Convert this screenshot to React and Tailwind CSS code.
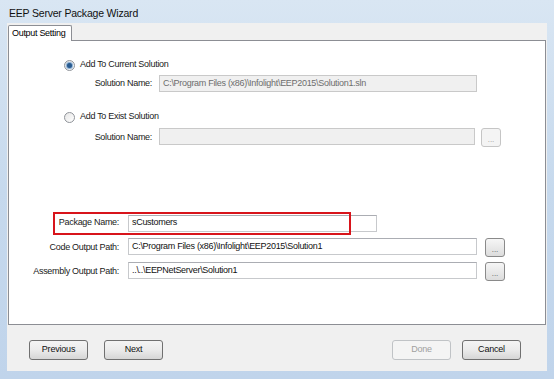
import React from "react";

const font = { fontFamily: '"Liberation Sans", Arial, sans-serif' };

const Radio = ({ checked }) => (
  <span className="w-[11px] h-[11px] rounded-full border border-[#8f9399] bg-gradient-to-br from-[#e6e6e6] to-[#ffffff] flex items-center justify-center">
    {checked && (
      <span className="w-[5px] h-[5px] rounded-full bg-[#2a5b8f] shadow-[0_0_1px_1px_#7fa7cf]" />
    )}
  </span>
);

const TextBox = ({ value, disabled, className }) => (
  <div
    className={`h-[17px] border flex items-center pl-[3px] text-[9px] tracking-[-0.3px] overflow-hidden whitespace-nowrap ${
      disabled
        ? "bg-[#f0f0f0] border-[#c9c9c9] text-[#6d6d6d]"
        : "bg-white border-[#c7c9cc] border-t-[#abadb3] text-[#111]"
    } ${className}`}
  >
    {value}
  </div>
);

const DotsButton = ({ disabled }) => (
  <button
    className={`w-[20px] h-[19px] rounded-[3px] border text-[8px] leading-none pb-[2px] flex items-end justify-center ${
      disabled
        ? "border-[#c5c5c5] bg-[#f4f4f4] text-[#9a9a9a]"
        : "border-[#8a8a8a] bg-gradient-to-b from-[#f6f6f6] to-[#dcdcdc] text-[#555]"
    }`}
  >
    ...
  </button>
);

const WinButton = ({ children, disabled, className }) => (
  <button
    className={`w-[59px] h-[20px] rounded-[3px] border text-[9px] tracking-[-0.2px] ${
      disabled
        ? "border-[#c0c3c6] bg-[#f4f4f4] text-[#a0a0a0]"
        : "border-[#707070] bg-gradient-to-b from-[#f4f4f4] via-[#ebebeb] to-[#d6d6d6] text-[#111]"
    } ${className}`}
  >
    {children}
  </button>
);

const Label = ({ children, width }) => (
  <div
    className="text-[9px] tracking-[-0.3px] text-[#1a1a1a] text-right pr-[1px] whitespace-nowrap"
    style={{ width }}
  >
    {children}
  </div>
);

export default function App() {
  return (
    <div
      className="w-[554px] h-[379px] flex flex-col bg-gradient-to-b from-[#d9e6f3] via-[#c6d9ed] to-[#c0d4eb]"
      style={font}
    >
      {/* title bar */}
      <div className="h-[23px] pl-[9px] pt-[6px] text-[10.5px] tracking-[-0.2px] text-[#111]">
        EEP Server Package Wizard
      </div>

      <div className="ml-[7px] mr-[7px] mb-[8px] flex-1 bg-[#f0f0f0] flex flex-col">
        {/* tab strip */}
        <div className="h-[17px] flex items-end pl-[1px]">
          <div className="w-[64px] h-[16px] bg-white border border-b-0 border-[#8c8e94] rounded-t-[2px] text-[9px] tracking-[-0.3px] pl-[3px] pt-[1px] relative top-[1px]">
            Output Setting
          </div>
        </div>

        {/* panel */}
        <div className="ml-[1px] mr-[1px] h-[285px] bg-white border border-[#8c8e94] flex flex-col">
          <div className="mt-[18px] h-[12px] flex items-center pl-[55px] gap-[5px]">
            <Radio checked />
            <span className="text-[9px] tracking-[-0.3px] text-[#1a1a1a]">Add To Current Solution</span>
          </div>
          <div className="mt-[4px] flex items-center gap-[6px]">
            <Label width="144px">Solution Name:</Label>
            <TextBox
              disabled
              className="w-[318px]"
              value="C:\Program Files (x86)\Infolight\EEP2015\Solution1.sln"
            />
          </div>

          <div className="mt-[19px] h-[12px] flex items-center pl-[55px] gap-[5px]">
            <Radio />
            <span className="text-[9px] tracking-[-0.3px] text-[#1a1a1a]">Add To Exist Solution</span>
          </div>
          <div className="mt-[5px] h-[19px] flex items-start gap-[6px]">
            <Label width="144px">
              <div className="pt-[3px]">Solution Name:</div>
            </Label>
            <TextBox disabled className="w-[316px]" value="" />
            <DotsButton disabled />
          </div>

          <div className="mt-[68px] h-[16px] flex items-center gap-[8px] relative">
            <Label width="111px">Package Name:</Label>
            <TextBox className="w-[249px] h-[16px]" value="sCustomers" />
            <div className="absolute left-[44px] top-[-3px] w-[298px] h-[23px] border-2 border-[#d8141b]" />
          </div>

          <div className="mt-[7px] h-[19px] flex items-start gap-[8px]">
            <Label width="111px">
              <div className="pt-[3px]">Code Output Path:</div>
            </Label>
            <TextBox
              className="w-[349px]"
              value="C:\Program Files (x86)\Infolight\EEP2015\Solution1"
            />
            <DotsButton />
          </div>

          <div className="mt-[5px] h-[19px] flex items-start gap-[8px]">
            <Label width="111px">
              <div className="pt-[3px]">Assembly Output Path:</div>
            </Label>
            <TextBox className="w-[349px]" value="..\..\EEPNetServer\Solution1" />
            <DotsButton />
          </div>
        </div>

        {/* buttons */}
        <div className="mt-[15px] flex items-center pl-[22px] pr-[26px]">
          <WinButton>Previous</WinButton>
          <WinButton className="ml-[16px]">Next</WinButton>
          <div className="flex-1" />
          <WinButton disabled>Done</WinButton>
          <WinButton className="ml-[11px]">Cancel</WinButton>
        </div>
      </div>
    </div>
  );
}
